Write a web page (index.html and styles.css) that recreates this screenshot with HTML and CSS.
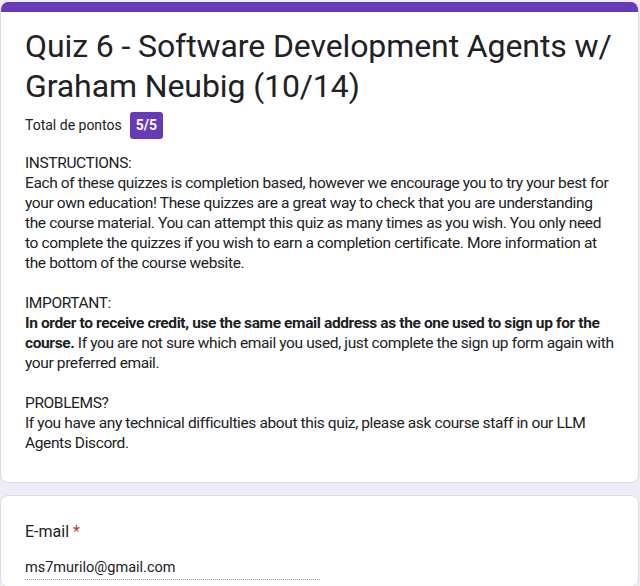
FILE: index.html
```html
<!DOCTYPE html>
<html>
<head>
<meta charset="utf-8">
<link rel="stylesheet" href="styles.css">
</head>
<body>
<div class="page">
  <div class="card header-card">
    <div class="top-bar"></div>
    <div class="header-body">
      <h1 class="title">Quiz 6 - Software Development Agents w/ Graham Neubig (10/14)</h1>
      <div class="score-row">
        <span class="score-label">Total de pontos</span>
        <span class="badge">5/5</span>
      </div>
      <div class="desc">
        <p>INSTRUCTIONS:<br>Each of these quizzes is completion based, however we encourage you to try your best for your own education! These quizzes are a great way to check that you are understanding the course material. You can attempt this quiz as many times as you wish. You only need to complete the quizzes if you wish to earn a completion certificate. More information at the bottom of the course website.</p>
        <p>IMPORTANT:<br><b>In order to receive credit, use the same email address as the one used to sign up for the course.</b> If you are not sure which email you used, just complete the sign up form again with your preferred email.</p>
        <p>PROBLEMS?<br>If you have any technical difficulties about this quiz, please ask course staff in our LLM Agents Discord.</p>
      </div>
    </div>
  </div>
  <div class="card question-card">
    <div class="q-label">E-mail <span class="req">*</span></div>
    <div class="q-value">ms7murilo@gmail.com</div>
  </div>
</div>
</body>
</html>
```
FILE: styles.css
```css
html, body {
  margin: 0;
  padding: 0;
  background: #f0ebf8;
  font-family: Roboto, "Noto Sans", sans-serif;
  color: #202124;
}
.page {
  width: 639px;
  padding-top: 2px;
  display: flex;
  flex-direction: column;
  gap: 12px;
}
.card {
  background: #fff;
  border: 1px solid #dadce0;
  border-radius: 8px;
  overflow: hidden;
}
.header-card {
  border-top: none;
}
.top-bar {
  height: 10px;
  background: #673ab7;
}
.header-body {
  padding: 14px 24px 29px 24px;
}
.title {
  margin: 0;
  font-weight: 400;
  font-size: 32px;
  line-height: 40px;
  letter-spacing: -0.1px;
}
.score-row {
  display: flex;
  align-items: center;
  gap: 8px;
  margin-top: 5px;
  height: 28px;
}
.score-label {
  font-size: 14px;
  line-height: 20px;
}
.badge {
  background: #673ab7;
  color: #fff;
  font-weight: 700;
  font-size: 14px;
  line-height: 19px;
  padding: 4px 6px;
  border-radius: 3px;
}
.desc {
  margin-top: 14px;
  font-size: 15.5px;
  letter-spacing: -0.38px;
  line-height: 20px;
}
.desc p {
  margin: 0 0 20px 0;
}
.desc p:last-child {
  margin-bottom: 0;
}
.question-card {
  padding: 24px 24px 0 24px;
  height: 66px;
}
.q-label {
  font-size: 16px;
  line-height: 24px;
}
.req {
  color: #d93025;
}
.q-value {
  margin-top: 14px;
  width: 295px;
  font-size: 14.5px;
  line-height: 20px;
  padding-bottom: 1px;
  border-bottom: 1px dotted #9aa0a6;
}
```
